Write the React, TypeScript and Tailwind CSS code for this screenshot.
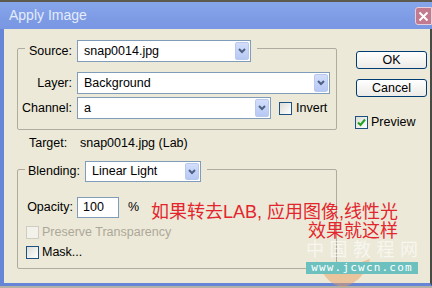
import React from 'react';

const Chevron = () => (
    <svg width="8" height="6" viewBox="0 0 8 6">
        <path d="M1 1 L4 4 L7 1" fill="none" stroke="#4d6185" strokeWidth="2" />
    </svg>
);

const Dropdown = ({ value, className }: { value: string; className: string }) => (
    <div className={`flex items-center border border-[#7f9db9] bg-white ${className}`}>
        <span className="flex-1 pl-[6px] text-[12.5px] leading-none text-black">{value}</span>
        <div className="m-[1px] flex w-[14px] self-stretch items-center justify-center rounded-[2px] border border-[#b9c8ef] bg-gradient-to-b from-[#d3defb] to-[#b6c8f4]">
            <Chevron />
        </div>
    </div>
);

const Checkbox = ({ checked, disabled }: { checked?: boolean; disabled?: boolean }) => (
    <div
        className={`flex h-[13px] w-[13px] items-center justify-center border ${
            disabled ? 'border-[#cfcdc2] bg-[#f2f1ea]' : 'border-[#1c5180] bg-gradient-to-br from-[#dcdcd7] to-white'
        }`}
    >
        {checked && (
            <svg width="9" height="9" viewBox="0 0 9 9">
                <path d="M1 4.5 L3.5 7 L8 1.5" fill="none" stroke="#21a121" strokeWidth="2" />
            </svg>
        )}
    </div>
);

const Button = ({ label }: { label: string }) => (
    <div className="flex h-[18px] w-[71px] items-center justify-center rounded-[3px] border border-[#003c74] bg-gradient-to-b from-white to-[#ecebe6] text-[12.5px] text-black">
        {label}
    </div>
);

export default function App() {
    return (
        <div className="relative flex h-[288px] w-[432px] flex-col overflow-hidden bg-[#8c8a80] font-['Liberation_Sans','Noto_Sans_CJK_SC',sans-serif]">
            {/* title bar */}
            <div className="flex h-[29px] items-center border-t-2 border-[#5c594d] bg-gradient-to-b from-[#87a5ea] to-[#7896e2] pl-[9px]">
                <span className="flex-1 text-[14px] text-[#e4ebfb]">Apply Image</span>
                <div className="mt-[1px] flex h-[18px] w-[17px] items-center justify-center rounded-l-[3px] border border-[#e8d0d8] bg-[#c27a8e]">
                    <svg width="11" height="11" viewBox="0 0 11 11">
                        <path d="M1.5 1.5 L9.5 9.5 M9.5 1.5 L1.5 9.5" stroke="white" strokeWidth="2" />
                    </svg>
                </div>
            </div>

            {/* body */}
            <div className="flex flex-1 border-b-[3px] border-l-4 border-r-2 border-b-[#6685d6] border-l-[#6685d6] border-r-[#4a4a44] bg-[#ece9d8] pl-[13px] pt-[19px] text-[12.5px] text-black">
                <div className="flex flex-col">
                    {/* source group */}
                    <div className="w-[320px] rounded-[2px] border border-[#aeaca0] pb-[10px]">
                        <div className="-mt-[9px] ml-[7px] flex h-[22px] w-fit items-center gap-[5px] bg-[#ece9d8] pr-[6px]">
                            <span className="w-[47px] text-right">Source:</span>
                            <Dropdown value="snap0014.jpg" className="h-[22px] w-[174px]" />
                        </div>
                        <div className="mt-[10px] flex h-[22px] items-center gap-[5px]">
                            <span className="w-[54px] text-right">Layer:</span>
                            <Dropdown value="Background" className="h-[22px] w-[253px]" />
                        </div>
                        <div className="mt-[3px] flex h-[22px] items-center">
                            <span className="w-[54px] text-right">Channel:</span>
                            <Dropdown value="a" className="ml-[5px] h-[22px] w-[194px]" />
                            <div className="ml-[8px]">
                                <Checkbox />
                            </div>
                            <span className="ml-[4px]">Invert</span>
                        </div>
                    </div>

                    {/* target */}
                    <div className="mt-[6px] flex h-[14px] items-center pl-[12px]">
                        <span className="w-[51px]">Target:</span>
                        <span>snap0014.jpg (Lab)</span>
                    </div>

                    {/* blending group */}
                    <div className="mt-[19px] w-[320px] rounded-[2px] border border-[#aeaca0] pb-[9px]">
                        <div className="-mt-[9px] ml-[7px] flex h-[21px] w-fit items-center gap-[5px] bg-[#ece9d8] pr-[6px]">
                            <span className="w-[55px] text-right">Blending:</span>
                            <Dropdown value="Linear Light" className="h-[21px] w-[116px]" />
                        </div>
                        <div className="mt-[15px] flex h-[21px] items-center">
                            <span className="w-[55px] text-right">Opacity:</span>
                            <div className="ml-[4px] flex h-[21px] w-[42px] items-center border border-[#7f9db9] bg-white pl-[5px]">100</div>
                            <span className="ml-[9px]">%</span>
                        </div>
                        <div className="mt-[8px] flex h-[13px] items-center pl-[8px]">
                            <Checkbox disabled />
                            <span className="ml-[3px] text-[#aca899]">Preserve Transparency</span>
                        </div>
                        <div className="mt-[7px] flex h-[13px] items-center pl-[8px]">
                            <Checkbox />
                            <span className="ml-[3px]">Mask...</span>
                        </div>
                    </div>
                </div>

                {/* buttons */}
                <div className="ml-[19px] mt-[3px] flex flex-col">
                    <Button label="OK" />
                    <div className="mt-[10px]">
                        <Button label="Cancel" />
                    </div>
                    <div className="-ml-[1px] mt-[16px] flex items-center">
                        <Checkbox checked />
                        <span className="ml-[3px]">Preview</span>
                    </div>
                </div>
            </div>
            <div className="h-[2px] bg-[#b4b2a8]" />

            {/* watermark */}
            <div className="absolute left-[306px] top-[241px] flex w-[112px] flex-col items-stretch">
                <svg className="absolute left-[8px] top-[10px]" width="60" height="40" viewBox="0 0 60 40">
                    <path d="M2 10 Q20 22 56 8 Q50 30 30 36 Q14 36 2 10 Z" fill="#e8a060" opacity="0.5" />
                </svg>
                <div className="relative flex h-[18px] justify-between text-[18px] leading-[18px] text-white/60">
                    <span>中</span>
                    <span>国</span>
                    <span>教</span>
                    <span>程</span>
                    <span>网</span>
                </div>
                <div className="relative mt-[3px] flex h-[12px] items-center justify-center bg-[#6cc1bf] font-['DejaVu_Sans_Mono',monospace] text-[11px] tracking-[1.2px] text-white">
                    www.jcwcn.com
                </div>
            </div>

            {/* annotation */}
            <div className="absolute right-[34px] top-[203px] text-right text-[18px] leading-[19px] text-[#e3262e]">
                <div>如果转去LAB, 应用图像,线性光</div>
                <div>效果就这样</div>
            </div>
        </div>
    );
}
